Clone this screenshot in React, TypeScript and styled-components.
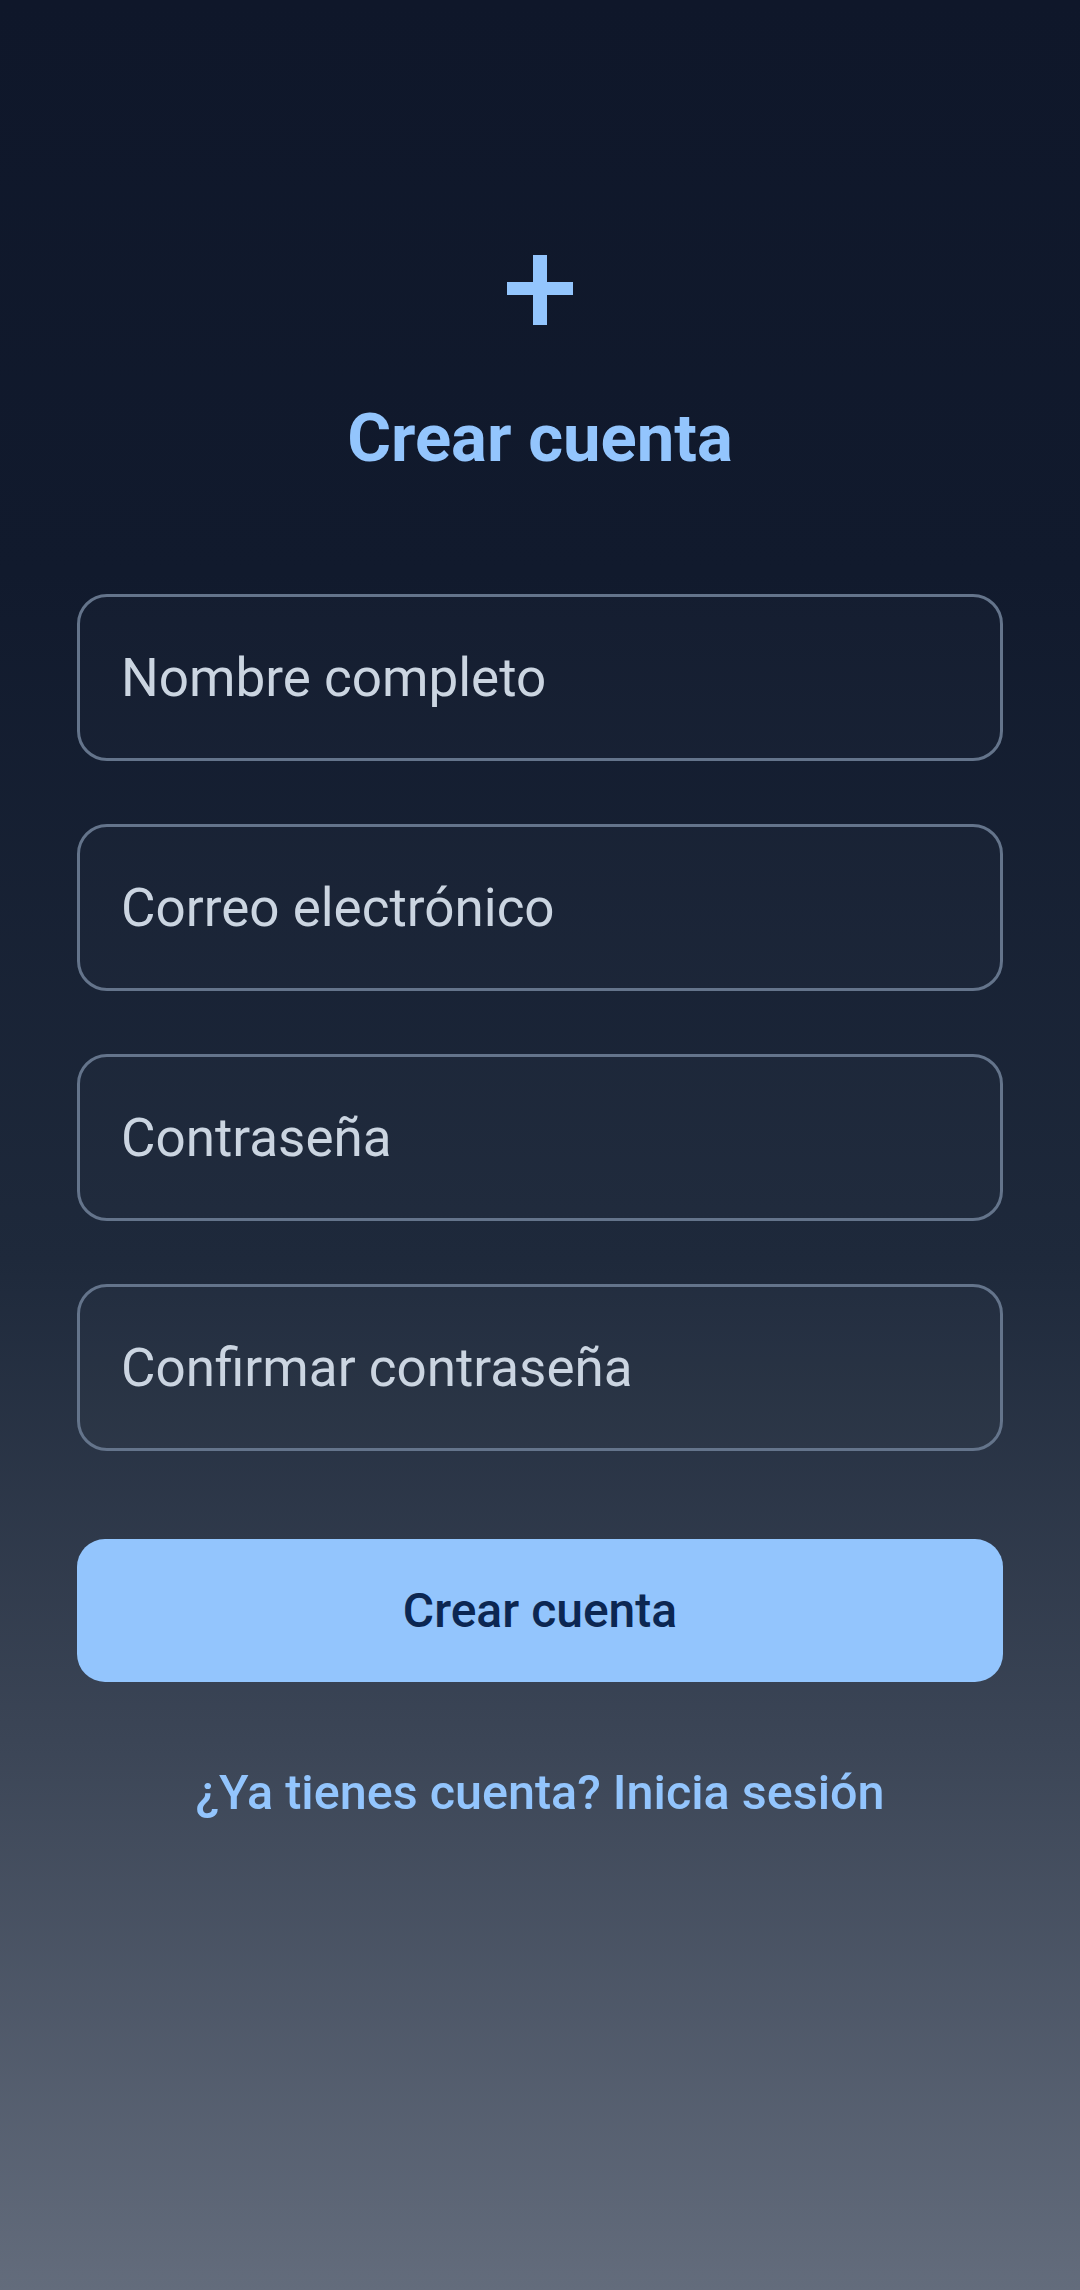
import styled, { createGlobalStyle } from "styled-components";

const GlobalStyle = createGlobalStyle`
  html, body {
    margin: 0;
    padding: 0;
  }
  body {
    font-family: Roboto, "Noto Sans", "Liberation Sans", sans-serif;
  }
  * {
    box-sizing: border-box;
  }
`;

const fields = [
  { name: "name", type: "text", placeholder: "Nombre completo" },
  { name: "email", type: "email", placeholder: "Correo electrónico" },
  { name: "password", type: "password", placeholder: "Contraseña" },
  { name: "confirm", type: "password", placeholder: "Confirmar contraseña" },
];

const PlusIcon = () => (
  <svg width="66" height="70" viewBox="0 0 66 70" fill="#93c5fd">
    <rect x="26" y="0" width="14" height="70" />
    <rect x="0" y="27" width="66" height="13" />
  </svg>
);

const App = () => {
  return (
    <>
      <GlobalStyle />
      <Screen>
        <IconWrapper>
          <PlusIcon />
        </IconWrapper>
        <Title>{"Crear cuenta"}</Title>
        <Form onSubmit={(e) => e.preventDefault()}>
          <Fields>
            {fields.map((field) => (
              <Field
                key={field.name}
                name={field.name}
                type={field.type}
                placeholder={field.placeholder}
              />
            ))}
          </Fields>
          <SubmitButton type="submit">{"Crear cuenta"}</SubmitButton>
        </Form>
        <LoginLink href="#">{"¿Ya tienes cuenta? Inicia sesión"}</LoginLink>
      </Screen>
    </>
  );
};

export default App;

const Screen = styled.div`
  width: 100%;
  min-height: 2290px;
  padding: 255px 77px 0 77px;
  display: flex;
  flex-direction: column;
  align-items: center;
  background: linear-gradient(
    180deg,
    #0f172a 0%,
    #111a2d 25%,
    #1e293b 55%,
    #3b4556 76%,
    #636c7c 100%
  );
`;

const IconWrapper = styled.div`
  width: 66px;
  height: 70px;
  display: flex;
  svg {
    display: block;
  }
`;

const Title = styled.h1`
  margin: 74px 0 0 0;
  color: #93c5fd;
  font-size: 67px;
  font-weight: 700;
  line-height: 79px;
  text-align: center;
`;

const Form = styled.form`
  width: 100%;
  margin-top: 116px;
  display: flex;
  flex-direction: column;
  gap: 88px;
`;

const Fields = styled.div`
  display: flex;
  flex-direction: column;
  gap: 63px;
`;

const Field = styled.input`
  width: 100%;
  height: 167px;
  padding: 0 41px;
  border: 3px solid #64748b;
  border-radius: 30px;
  background: rgba(255, 255, 255, 0.015);
  color: #e2e8f0;
  font-family: Roboto, "Noto Sans", "Liberation Sans", sans-serif;
  font-size: 53px;
  outline: none;
  &::placeholder {
    color: #cbd5e1;
    opacity: 1;
  }
`;

const SubmitButton = styled.button`
  width: 100%;
  height: 143px;
  border: none;
  border-radius: 28px;
  background-color: #93c5fd;
  color: #0c2752;
  font-family: Roboto, "Noto Sans", "Liberation Sans", sans-serif;
  font-size: 48px;
  font-weight: 500;
  cursor: pointer;
`;

const LoginLink = styled.a`
  margin-top: 82px;
  color: #93c5fd;
  font-size: 48.5px;
  font-weight: 500;
  line-height: 58px;
  text-decoration: none;
  text-align: center;
`;
